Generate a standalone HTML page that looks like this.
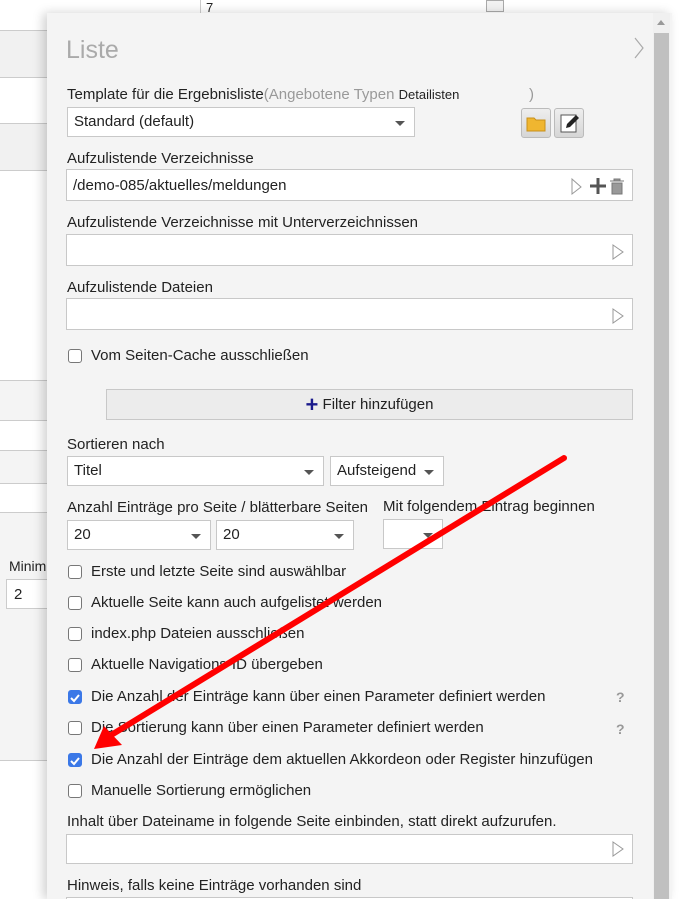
<!DOCTYPE html>
<html><head><meta charset="utf-8"><style>
*{box-sizing:border-box;margin:0;padding:0}
html,body{width:680px;height:899px;overflow:hidden}
body{background:#fff;font-family:"Liberation Sans",Arial,sans-serif;font-size:15px;color:#222;position:relative}
.a{position:absolute}
.band{position:absolute;left:0;width:60px;border-top:1px solid #ccc}
.panel{position:absolute;left:47px;top:13px;width:625px;height:886px;background:#f4f4f4;box-shadow:-4px 0 10px rgba(0,0,0,.18);overflow:hidden}
.lbl{position:absolute;font-size:15px;color:#222;white-space:nowrap}
.inp{position:absolute;background:#fff;border:1px solid #c8c8c8;height:32px}
.sel{position:absolute;background:#fff;border:1px solid #c8c8c8;height:30px;font-size:15px;padding:5px 6px}
.sel:after{content:"";position:absolute;right:9px;top:13px;border:5px solid transparent;border-top:5px solid #555;border-bottom:0}
.cb{position:absolute;left:21px;width:14px;height:14px;border:1px solid #777;border-radius:3px;background:#fff}
.cb.on{background:#3b78e7;border-color:#3b78e7}
.cbt{position:absolute;left:44px;font-size:15px;white-space:nowrap}
.ptr{position:absolute;right:8px;top:9px}
.q{position:absolute;left:569px;color:#999;font-weight:bold;font-size:14px}
</style></head><body>
<div class="a" style="left:200px;top:0;width:290px;height:17px;border-left:1px solid #ccc;font-size:13px;padding-left:5px">7</div>
<div class="a" style="left:486px;top:0;width:18px;height:12px;border:1px solid #aaa;background:#f2f2f2"></div>
<div class="band" style="top:30px;height:47px;background:#f1f1f1"></div>
<div class="band" style="top:77px;height:46px;background:#fff"></div>
<div class="band" style="top:123px;height:47px;background:#f1f1f1"></div>
<div class="band" style="top:170px;height:210px;background:#fff"></div>
<div class="band" style="top:380px;height:40px;background:#f4f4f4"></div>
<div class="band" style="top:420px;height:30px;background:#fff"></div>
<div class="band" style="top:450px;height:33px;background:#f4f4f4"></div>
<div class="band" style="top:483px;height:29px;background:#fff"></div>
<div class="band" style="top:512px;height:248px;background:#f4f4f4"></div>
<div class="band" style="top:760px;height:140px;background:#fff"></div>
<div class="a" style="left:9px;top:558px;font-size:14px">Minim</div>
<div class="a" style="left:6px;top:579px;width:54px;height:30px;border:1px solid #ccc;background:#fff;padding:6px 7px">2</div>

<div class="panel">
<div class="a" style="left:19px;top:23px;font-size:25px;color:#aaa">Liste</div>
<svg class="a" style="left:586px;top:24px" width="12" height="22"><path d="M2 1 L10 11 L2 21" fill="none" stroke="#aaa" stroke-width="1.2"/></svg>
<div class="lbl" style="left:20px;top:73px">Template für die Ergebnisliste<span style="color:#999">(Angebotene Typen</span> <span style="font-size:13px">Detailisten</span><span style="position:absolute;left:462px;color:#999">)</span></div>
<div class="sel" style="left:20px;top:94px;width:348px">Standard (default)</div>
<div class="a" style="left:474px;top:95px;width:30px;height:30px;border:1px solid #bbb;border-radius:3px;background:linear-gradient(#eee,#d6d6d6)"><svg width="28" height="28"><path d="M5 9h7l2 2h9v11H5z" fill="#f0b630" stroke="#c8901a"/></svg></div>
<div class="a" style="left:507px;top:95px;width:30px;height:30px;border:1px solid #bbb;border-radius:3px;background:linear-gradient(#eee,#d6d6d6)"><svg width="28" height="28"><rect x="6" y="6" width="15" height="17" fill="#fff" stroke="#555"/><path d="M11 19l1-4 9-9 3 3-9 9z" fill="#222"/></svg></div>
<div class="lbl" style="left:20px;top:137px">Aufzulistende Verzeichnisse</div>
<div class="inp" style="left:19px;top:156px;width:567px;padding:7px 6px">/demo-085/aktuelles/meldungen
<svg class="a" style="right:4px;top:6px" width="58" height="20"><path d="M2 3l9 8-9 7z" fill="#fff" stroke="#999"/><path d="M20 10h16M28 2v16" stroke="#555" stroke-width="3"/><path d="M40 5h14M44 5v-2h6v2M42 7h10v11h-10z" fill="#999" stroke="#777"/></svg></div>
<div class="lbl" style="left:20px;top:201px">Aufzulistende Verzeichnisse mit Unterverzeichnissen</div>
<div class="inp" style="left:19px;top:221px;width:567px"><svg class="ptr" width="12" height="16"><path d="M1 1l10 7-10 7z" fill="#fff" stroke="#999"/></svg></div>
<div class="lbl" style="left:20px;top:266px">Aufzulistende Dateien</div>
<div class="inp" style="left:19px;top:285px;width:567px"><svg class="ptr" width="12" height="16"><path d="M1 1l10 7-10 7z" fill="#fff" stroke="#999"/></svg></div>
<div class="cb" style="top:336px"></div><div class="cbt" style="top:334px">Vom Seiten-Cache ausschließen</div>
<div class="a" style="left:59px;top:376px;width:527px;height:31px;border:1px solid #c8c8c8;background:#ececec;text-align:center;padding-top:6px"><span style="color:#1a1a8c;font-size:22px;font-weight:bold;line-height:10px;vertical-align:-3px">+</span> Filter hinzufügen</div>
<div class="lbl" style="left:20px;top:423px">Sortieren nach</div>
<div class="sel" style="left:20px;top:443px;width:257px">Titel</div>
<div class="sel" style="left:283px;top:443px;width:114px">Aufsteigend</div>
<div class="lbl" style="left:20px;top:486px">Anzahl Einträge pro Seite / blätterbare Seiten</div>
<div class="lbl" style="left:336px;top:485px">Mit folgendem Eintrag beginnen</div>
<div class="sel" style="left:20px;top:507px;width:144px">20</div>
<div class="sel" style="left:169px;top:507px;width:138px">20</div>
<div class="sel" style="left:336px;top:506px;width:60px"></div>
<div class="cb" style="top:552px"></div><div class="cbt" style="top:550px">Erste und letzte Seite sind auswählbar</div>
<div class="cb" style="top:583px"></div><div class="cbt" style="top:581px">Aktuelle Seite kann auch aufgelistet werden</div>
<div class="cb" style="top:614px"></div><div class="cbt" style="top:612px">index.php Dateien ausschließen</div>
<div class="cb" style="top:645px"></div><div class="cbt" style="top:643px">Aktuelle Navigations-ID übergeben</div>
<div class="cb on" style="top:677px"><svg width="12" height="12"><path d="M2 6l3 3 5-6" stroke="#fff" stroke-width="2" fill="none"/></svg></div><div class="cbt" style="top:675px">Die Anzahl der Einträge kann über einen Parameter definiert werden</div><div class="q" style="top:676px">?</div>
<div class="cb" style="top:708px"></div><div class="cbt" style="top:706px">Die Sortierung kann über einen Parameter definiert werden</div><div class="q" style="top:708px">?</div>
<div class="cb on" style="top:740px"><svg width="12" height="12"><path d="M2 6l3 3 5-6" stroke="#fff" stroke-width="2" fill="none"/></svg></div><div class="cbt" style="top:738px">Die Anzahl der Einträge dem aktuellen Akkordeon oder Register hinzufügen</div>
<div class="cb" style="top:771px"></div><div class="cbt" style="top:769px">Manuelle Sortierung ermöglichen</div>
<div class="lbl" style="left:20px;top:800px">Inhalt über Dateiname in folgende Seite einbinden, statt direkt aufzurufen.</div>
<div class="inp" style="left:19px;top:821px;width:567px;height:30px"><svg class="ptr" width="12" height="16" style="top:6px"><path d="M1 1l10 7-10 7z" fill="#fff" stroke="#999"/></svg></div>
<div class="lbl" style="left:20px;top:864px">Hinweis, falls keine Einträge vorhanden sind</div>
<div class="inp" style="left:19px;top:884px;width:567px"></div>
</div>
<div class="a" style="left:653px;top:13px;width:17px;height:886px;background:#f0f0f0"></div>
<div class="a" style="left:654px;top:33px;width:15px;height:866px;background:#c0c0c0"></div>
<svg class="a" style="left:656px;top:18px" width="10" height="8"><path d="M1 7l4-5 4 5z" fill="#999"/></svg>
<svg class="a" style="left:0;top:0" width="680" height="899"><line x1="564" y1="458" x2="108" y2="737" stroke="#f00" stroke-width="6" stroke-linecap="round"/><path d="M94 749L104 726L122 745z" fill="#f00"/></svg>
</body></html>
